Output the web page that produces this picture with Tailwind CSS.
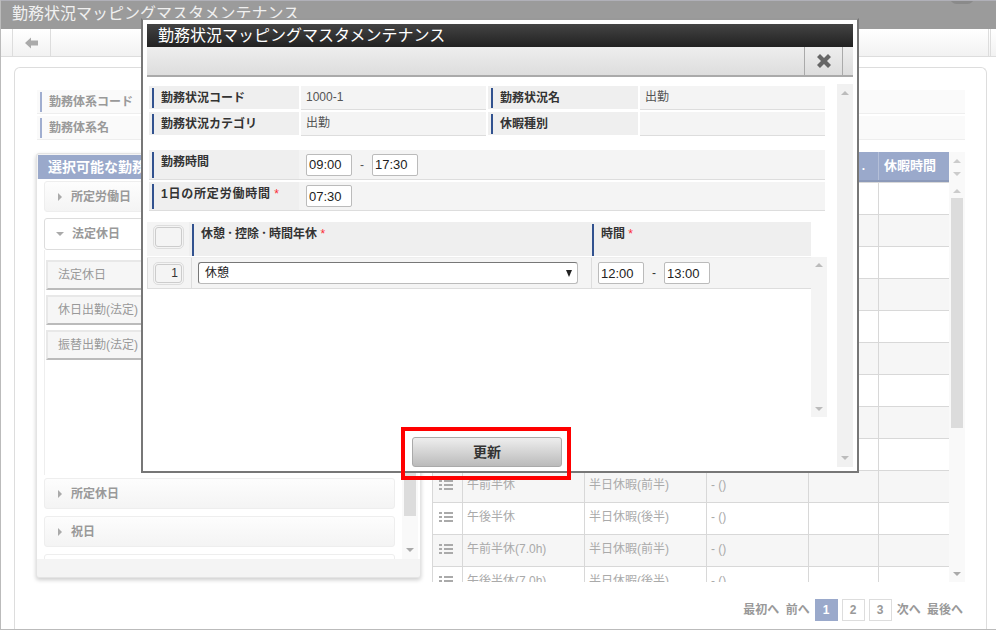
<!DOCTYPE html>
<html lang="ja"><head><meta charset="utf-8">
<script src="https://cdn.jsdelivr.net/npm/@tailwindcss/browser@4"></script>
</head>
<body class="bg-white">
<div class="relative w-[996px] h-[630px] overflow-hidden bg-white font-['Liberation_Sans','Noto_Sans_CJK_JP',sans-serif] text-[12px] text-[#999]">
  <!-- page -->
  <div class="flex flex-col h-full border-l border-l-[#bbb] border-b border-b-[#bbb]">
    <header class="relative h-[29px] shrink-0 bg-[#9b9b9b] border-t border-t-[#b0b0b8] pl-[11px] overflow-hidden">
      <span class="block text-[16px] leading-[24px] mt-[1px] text-[#f0f0f0]">勤務状況マッピングマスタメンテナンス</span>
      <span class="absolute right-[22px] -top-[10px] w-[24px] h-[13px] rounded-full bg-[#8a8a8a]"></span>
    </header>
    <div class="h-[28px] shrink-0 flex items-center border-b border-b-[#ddd] bg-gradient-to-b from-white to-[#f2f2f2] pl-[11px] pr-[5px]">
      <div class="w-[39px] h-full flex items-center justify-center border-x border-[#ddd]">
        <svg width="13" height="12" viewBox="0 0 13 12"><path d="M0 6 6 0.5V3.5H13V8.5H6V11.5Z" fill="#aaa"/></svg>
      </div>
      <div class="ml-auto w-[3px] h-full border-x border-[#ddd]"></div>
    </div>
    <main class="flex-1 min-h-0 pt-[10px] pl-[13px] pr-[9px]">
      <div class="h-full relative border-x border-t border-[#ddd] rounded-t-[6px] pl-[22px] pr-[21px] pt-[22px]">
        <div class="flex flex-col gap-[2px] text-[12px]">
          <div class="h-[24px] bg-[#fafafa] border-b border-b-[#eee] flex items-center">
            <span class="ml-[3px] border-l-2 border-l-[#a0aed0] pl-[7px] h-[20px] leading-[20px] font-bold">勤務体系コード</span>
          </div>
          <div class="h-[24px] bg-[#fafafa] border-b border-b-[#eee] flex items-center">
            <span class="ml-[3px] border-l-2 border-l-[#a0aed0] pl-[7px] h-[20px] leading-[20px] font-bold">勤務体系名</span>
          </div>
        </div>
        <div class="flex mt-[13px] h-[430px] items-start">
          <!-- left panel -->
          <section class="w-[385px] h-[425px] shrink-0 -ml-[1px] bg-[#f4f4f4] rounded-[3px] border border-[#e4e4e4] shadow-[0_2px_4px_rgba(0,0,0,0.2)] flex flex-col overflow-hidden">
            <div class="h-[24px] shrink-0 mx-[1px] mt-[1px] bg-[#9aa9cb] text-white font-bold text-[14px] leading-[24px] pl-[10px] whitespace-nowrap">選択可能な勤務状況</div>
            <div class="relative h-[380px] shrink-0 bg-white flex overflow-hidden">
              <div class="w-[365px] shrink-0 pl-[7px] pr-[7px] pt-[2px] flex flex-col overflow-hidden">
                <div class="h-[31px] shrink-0 rounded-[3px] border border-[#eee] bg-gradient-to-b from-[#fdfdfd] to-[#f4f4f4] flex items-center font-bold text-[12px] gap-[9px] pl-[13px]"><span class="border-y-[4px] border-y-transparent border-l-[4px] border-l-[#aaa]"></span>所定労働日</div>
                <div class="h-[32px] mt-[6px] shrink-0 rounded-[3px] border border-[#ddd] flex items-center font-bold text-[12px] gap-[8px] pl-[11px]"><span class="border-x-[4px] border-x-transparent border-t-[4px] border-t-[#aaa]"></span>法定休日</div>
                <div class="h-[225px] shrink-0 border-l border-l-[#eee] pl-[1px] flex flex-col gap-[5px] pt-[10px]">
                  <div class="h-[30px] shrink-0 bg-[#f6f6f6] border-2 border-[#e8e8e8] border-b-[#bbb] pl-[10px] leading-[26px]">法定休日</div>
                  <div class="h-[30px] shrink-0 bg-[#f6f6f6] border-2 border-[#e8e8e8] border-b-[#bbb] pl-[10px] leading-[26px]">休日出勤(法定)</div>
                  <div class="h-[30px] shrink-0 bg-[#f6f6f6] border-2 border-[#e8e8e8] border-b-[#bbb] pl-[10px] leading-[26px]">振替出勤(法定)</div>
                </div>
                <div class="h-[31px] mt-[3px] shrink-0 rounded-[3px] border border-[#eee] bg-gradient-to-b from-[#fdfdfd] to-[#f4f4f4] flex items-center font-bold text-[12px] gap-[9px] pl-[13px]"><span class="border-y-[4px] border-y-transparent border-l-[4px] border-l-[#aaa]"></span>所定休日</div>
                <div class="h-[31px] mt-[7px] shrink-0 rounded-[3px] border border-[#eee] bg-gradient-to-b from-[#fdfdfd] to-[#f4f4f4] flex items-center font-bold text-[12px] gap-[9px] pl-[13px]"><span class="border-y-[4px] border-y-transparent border-l-[4px] border-l-[#aaa]"></span>祝日</div>
                <div class="h-[31px] mt-[7px] shrink-0 rounded-[3px] border border-[#eee] bg-white"></div>
              </div>
              <div class="w-[16px] shrink-0 bg-[#f9f9f9] relative flex flex-col items-center">
                <div class="w-[12px] bg-[#dcdcdc] h-[337px]"></div>
                <span class="absolute bottom-[7px] border-x-[4px] border-x-transparent border-t-[4px] border-t-[#aaa]"></span>
              </div>
            </div>
          </section>
          <!-- right table -->
          <section class="ml-[11px] flex h-[430px] -mt-[1px]">
            <div class="w-[517px] shrink-0 h-[430px] overflow-hidden">
              <div class="h-[30px] bg-[#9aa9cb] border-b-2 border-b-[#8c9ab9] flex text-white font-bold leading-[28px]">
                <div class="w-[376px]"></div><div class="w-[70px] border-l border-l-[#b4bfd8] text-right pr-[13px]">.</div><div class="w-[71px] border-l border-l-[#b4bfd8] pl-[5px] text-[13px]">休暇時間</div>
              </div>
              <table class="w-[517px] table-fixed border-collapse text-[12px] text-[#aaa]">
                <colgroup><col class="w-[30px]"><col class="w-[122px]"><col class="w-[122px]"><col class="w-[102px]"><col class="w-[70px]"><col class="w-[71px]"></colgroup>
                <tbody class="[&_td]:border [&_td]:border-[#d8d8d8] [&_td]:h-[32px] [&_td]:px-[4px] [&_td]:pb-[4px] [&_td]:whitespace-nowrap [&_td]:overflow-hidden">
                  <tr><td></td><td></td><td></td><td></td><td></td><td></td></tr>
                  <tr class="bg-[#f6f6f6]"><td></td><td></td><td></td><td></td><td></td><td></td></tr>
                  <tr><td></td><td></td><td></td><td></td><td></td><td></td></tr>
                  <tr class="bg-[#f6f6f6]"><td></td><td></td><td></td><td></td><td></td><td></td></tr>
                  <tr><td></td><td></td><td></td><td></td><td></td><td></td></tr>
                  <tr class="bg-[#f6f6f6]"><td></td><td></td><td></td><td></td><td></td><td></td></tr>
                  <tr><td></td><td></td><td></td><td></td><td></td><td></td></tr>
                  <tr class="bg-[#f6f6f6]"><td></td><td></td><td></td><td></td><td></td><td></td></tr>
                  <tr><td></td><td></td><td></td><td></td><td></td><td></td></tr>
                  <tr class="bg-[#f6f6f6]"><td><svg class="ml-[2px]" width="14" height="10" viewBox="0 0 14 10" fill="#aaa"><path d="M0 0h3v2H0zM5 0h9v2H5zM0 4h3v2H0zM5 4h9v2H5zM0 8h3v2H0zM5 8h9v2H5z"/></svg></td><td>午前半休</td><td>半日休暇(前半)</td><td>- ()</td><td></td><td></td></tr>
                  <tr><td><svg class="ml-[2px]" width="14" height="10" viewBox="0 0 14 10" fill="#aaa"><path d="M0 0h3v2H0zM5 0h9v2H5zM0 4h3v2H0zM5 4h9v2H5zM0 8h3v2H0zM5 8h9v2H5z"/></svg></td><td>午後半休</td><td>半日休暇(後半)</td><td>- ()</td><td></td><td></td></tr>
                  <tr class="bg-[#f6f6f6]"><td><svg class="ml-[2px]" width="14" height="10" viewBox="0 0 14 10" fill="#aaa"><path d="M0 0h3v2H0zM5 0h9v2H5zM0 4h3v2H0zM5 4h9v2H5zM0 8h3v2H0zM5 8h9v2H5z"/></svg></td><td>午前半休(7.0h)</td><td>半日休暇(前半)</td><td>- ()</td><td></td><td></td></tr>
                  <tr><td><svg class="ml-[2px]" width="14" height="10" viewBox="0 0 14 10" fill="#aaa"><path d="M0 0h3v2H0zM5 0h9v2H5zM0 4h3v2H0zM5 4h9v2H5zM0 8h3v2H0zM5 8h9v2H5z"/></svg></td><td>午後半休(7.0h)</td><td>半日休暇(後半)</td><td>- ()</td><td></td><td></td></tr>
                </tbody>
              </table>
            </div>
            <div class="w-[16px] h-[430px] bg-[#f9f9f9] flex flex-col items-center pt-[7px] relative">
              <span class="border-x-[4px] border-x-transparent border-b-[4px] border-b-[#ccc]"></span>
              <span class="mt-[9px] border-x-[4px] border-x-transparent border-t-[4px] border-t-[#ccc]"></span>
              <span class="mt-[13px] border-x-[4px] border-x-transparent border-b-[4px] border-b-[#ccc]"></span>
              <div class="w-[12px] h-[230px] bg-[#dcdcdc] mt-[5px]"></div>
              <span class="absolute bottom-[6px] border-x-[4px] border-x-transparent border-t-[4px] border-t-[#aaa]"></span>
            </div>
          </section>
        </div>
        <nav class="absolute right-[23px] top-[531px] flex items-center h-[22px] font-bold text-[12px] [word-spacing:3px]">
          <span class="mr-[5px]">最初へ 前へ</span>
          <span class="w-[23px] h-[22px] bg-[#9aa9cb] text-white flex items-center justify-center">1</span>
          <span class="w-[23px] h-[22px] ml-[4px] border border-[#ddd] flex items-center justify-center">2</span>
          <span class="w-[23px] h-[22px] ml-[4px] border border-[#ddd] flex items-center justify-center">3</span>
          <span class="ml-[5px]">次へ 最後へ</span>
        </nav>
      </div>
    </main>
  </div>

  <!-- modal -->
  <div class="absolute left-[141px] top-[18px] w-[718px] h-[455px] bg-white border-2 border-[#777] border-t-[#999] pt-[4px] pl-[4px] pr-[4px] text-[#333]">
    <div class="h-[23px] bg-gradient-to-b from-[#444] to-[#222] text-white text-[16px] leading-[23px] pl-[11px] whitespace-nowrap">勤務状況マッピングマスタメンテナンス</div>
    <div class="h-[30px] bg-gradient-to-b from-[#eee] to-[#ddd] border-b-2 border-b-[#aaa] flex justify-end pr-[10px]">
      <div class="w-[39px] border-x border-[#aaa] flex items-center justify-center">
        <svg width="14" height="14" viewBox="0 0 14 14"><path d="M3 0 7 4 11 0 14 3 10 7 14 11 11 14 7 10 3 14 0 11 4 7 0 3Z" fill="#666"/></svg>
      </div>
    </div>
    <div class="w-[690px] pl-[2px]">
      <div class="mt-[9px] grid grid-cols-[150px_185px_150px_185px] gap-x-[2px] gap-y-[2px] w-[676px] items-start">
        <div class="h-[23px] bg-[#efefef] pt-[2px]"><span class="block ml-[3px] border-l-2 border-l-[#32528f] pl-[7px] h-[20px] leading-[20px] font-bold">勤務状況コード</span></div>
        <div class="h-[24px] bg-[#f4f4f4] border-b border-b-[#ddd] leading-[23px] pl-[5px] text-[#555]">1000-1</div>
        <div class="h-[23px] bg-[#efefef] pt-[2px]"><span class="block ml-[3px] border-l-2 border-l-[#32528f] pl-[7px] h-[20px] leading-[20px] font-bold">勤務状況名</span></div>
        <div class="h-[24px] bg-[#f4f4f4] border-b border-b-[#ddd] leading-[23px] pl-[5px] text-[#555]">出勤</div>
        <div class="h-[23px] bg-[#efefef] pt-[2px]"><span class="block ml-[3px] border-l-2 border-l-[#32528f] pl-[7px] h-[20px] leading-[20px] font-bold">勤務状況カテゴリ</span></div>
        <div class="h-[24px] bg-[#f4f4f4] border-b border-b-[#ddd] leading-[23px] pl-[5px] text-[#555]">出勤</div>
        <div class="h-[23px] bg-[#efefef] pt-[2px]"><span class="block ml-[3px] border-l-2 border-l-[#32528f] pl-[7px] h-[20px] leading-[20px] font-bold">休暇種別</span></div>
        <div class="h-[24px] bg-[#f4f4f4] border-b border-b-[#ddd] pl-[5px]"></div>
      </div>
      <div class="mt-[14px] w-[676px] flex flex-col gap-[2px]">
        <div class="h-[30px] flex border-b border-b-[#ddd] bg-[#f4f4f4]">
          <div class="w-[150px] bg-[#efefef]"><span class="block ml-[3px] mt-[2px] border-l-2 border-l-[#32528f] pl-[7px] h-[26px] leading-[20px] font-bold">勤務時間</span></div>
          <div class="flex items-center pl-[5px] ml-[2px] text-[#555]">
            <input class="w-[46px] h-[22px] bg-white border border-[#bbb] rounded-[2px] px-[2px] text-[13px] text-[#222]" value="09:00"><span class="mx-[8px]">-</span><input class="w-[46px] h-[22px] bg-white border border-[#bbb] rounded-[2px] px-[2px] text-[13px] text-[#222]" value="17:30">
          </div>
        </div>
        <div class="h-[29px] flex border-b border-b-[#ddd] bg-[#f4f4f4]">
          <div class="w-[150px] bg-[#efefef]"><span class="block ml-[3px] mt-[2px] border-l-2 border-l-[#32528f] pl-[7px] h-[25px] leading-[21px] font-bold whitespace-nowrap"><span class="tracking-[0.8px]">1日の所定労働時間</span> <span class="text-red-500 font-normal">*</span></span></div>
          <div class="flex items-center pl-[5px] ml-[2px]">
            <input class="w-[46px] h-[22px] bg-white border border-[#bbb] rounded-[2px] px-[2px] text-[13px] text-[#222]" value="07:30">
          </div>
        </div>
      </div>
      <div class="mt-[11px] -ml-[2px] flex">
        <div class="w-[664px]">
          <div class="h-[34px] flex bg-[#efefef]">
            <div class="w-[42px] bg-[#f4f4f4] pt-[5px] pl-[8px]"><div class="w-[27px] h-[20px] border border-[#ccc] rounded-[3px] outline outline-1 outline-offset-1 outline-[#ddd]"></div></div>
            <div class="w-[403px] pt-[2px] pl-[3px]"><span class="block border-l-2 border-l-[#32528f] pl-[7px] h-[32px] leading-[20px] font-bold">休憩<span class="px-[2px]">･</span>控除<span class="px-[2px]">･</span>時間年休 <span class="text-red-500 font-normal">*</span></span></div>
            <div class="w-[219px] pt-[2px]"><span class="block border-l-2 border-l-[#32528f] pl-[7px] h-[32px] leading-[20px] font-bold">時間 <span class="text-red-500 font-normal">*</span></span></div>
          </div>
          <div class="mt-[1px] h-[32px] flex bg-[#f4f4f4] border-y border-y-[#ddd] border-t-[#eee] items-center">
            <div class="w-[45px] h-full border-x border-x-[#ddd] pl-[7px] flex items-center"><div class="w-[27px] h-[19px] border border-[#ccc] rounded-[3px] outline outline-1 outline-offset-1 outline-[#ddd] text-right pr-[3px] leading-[17px]">1</div></div>
            <div class="w-[400px] h-full flex items-center pl-[6px] border-r border-r-[#ddd]">
              <div class="w-[380px] h-[22px] bg-white border border-[#bbb] border-t-[#777] border-l-[#777] rounded-[3px] flex items-center justify-between pl-[6px] pr-[5px] text-[12px] text-[#222]">休憩<span class="border-x-[3.5px] border-x-transparent border-t-[7px] border-t-[#222]"></span></div>
            </div>
            <div class="flex items-center pl-[6px]"><input class="w-[46px] h-[22px] bg-white border border-[#bbb] rounded-[2px] px-[2px] text-[13px] text-[#222]" value="12:00"><span class="mx-[8px]">-</span><input class="w-[46px] h-[22px] bg-white border border-[#bbb] rounded-[2px] px-[2px] text-[13px] text-[#222]" value="13:00"></div>
          </div>
        </div>
        <div class="w-[16px] h-[160px] mt-[35px] bg-[#f4f4f4] flex flex-col items-center justify-between py-[6px]">
          <span class="border-x-[4px] border-x-transparent border-b-[4px] border-b-[#bbb]"></span>
          <span class="border-x-[4px] border-x-transparent border-t-[4px] border-t-[#bbb]"></span>
        </div>
      </div>
    </div>
    <div class="absolute right-[4px] top-[64px] w-[16px] h-[383px] bg-[#f1f1f1] flex flex-col items-center justify-between py-[7px]">
      <span class="border-x-[4px] border-x-transparent border-b-[4px] border-b-[#bbb]"></span>
      <span class="border-x-[4px] border-x-transparent border-t-[4px] border-t-[#bbb]"></span>
    </div>
    <div class="absolute left-[258px] top-[407px] w-[170px] h-[53px] border-[4px] border-[#f00] pl-[7px] pt-[6px] z-10">
      <button class="block w-[150px] h-[30px] rounded-[3px] border border-[#aaa] bg-gradient-to-b from-[#eee] to-[#bbb] font-bold text-[14px] text-[#333]">更新</button>
    </div>
  </div>
</div>
</body></html>
